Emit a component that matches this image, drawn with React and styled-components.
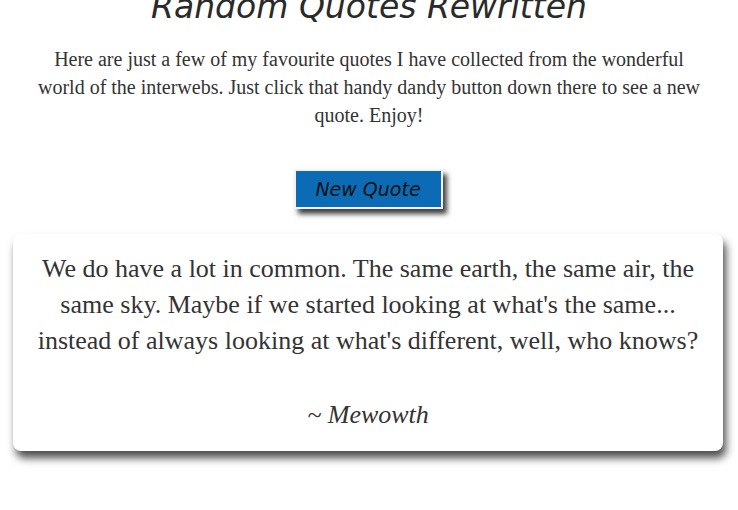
import React from "react";
import styled, { createGlobalStyle } from "styled-components";

const GlobalStyle = createGlobalStyle`
  body {
    margin: 0;
    background: #fff;
    font-family: "Liberation Serif", "Times New Roman", serif;
    color: #333;
  }
`;

const quote = {
  text: "We do have a lot in common. The same earth, the same air, the same sky. Maybe if we started looking at what's the same... instead of always looking at what's different, well, who knows?",
  author: "Mewowth",
};

export default function App() {
  return (
    <Page>
      <GlobalStyle />
      <Title>Random Quotes Rewritten</Title>
      <Intro>
        Here are just a few of my favourite quotes I have collected from the wonderful world of the
        interwebs. Just click that handy dandy button down there to see a new quote. Enjoy!
      </Intro>
      <ButtonRow>
        <QuoteButton onClick={() => {}}>New Quote</QuoteButton>
      </ButtonRow>
      <Card>
        <QuoteText>{quote.text}</QuoteText>
        <Author>~ {quote.author}</Author>
      </Card>
    </Page>
  );
}

const Page = styled.div`
  display: flex;
  flex-direction: column;
  align-items: center;
  padding: 0 15px 60px;
`;

const Title = styled.h1`
  margin: -13px 0 0;
  font-family: "Comic Sans MS", "DejaVu Sans", sans-serif;
  font-style: italic;
  font-weight: normal;
  font-size: 33px;
  line-height: 40px;
  color: #2a2a2a;
`;

const Intro = styled.p`
  margin: 18px 0 0;
  max-width: 670px;
  text-align: center;
  font-size: 20px;
  line-height: 28px;
  color: #333;
`;

const ButtonRow = styled.div`
  display: flex;
  justify-content: center;
  margin-top: 40px;
`;

const QuoteButton = styled.button`
  width: 149px;
  height: 40px;
  margin-right: 2px;
  background: #0b6bb5;
  border: 2px solid #f2f2f2;
  box-shadow: 4px 5px 5px rgba(0, 0, 0, 0.75);
  font-family: "Comic Sans MS", "DejaVu Sans", sans-serif;
  font-style: italic;
  font-size: 19px;
  color: #111;
  cursor: pointer;
`;

const Card = styled.div`
  align-self: stretch;
  margin: 25px 0 0 -2px;
  padding: 17px 18px 18px;
  background: #fff;
  border-radius: 8px;
  box-shadow: 3px 7px 9px rgba(0, 0, 0, 0.7);
  text-align: center;
`;

const QuoteText = styled.p`
  margin: 0;
  font-size: 26px;
  line-height: 36px;
  color: #333;
`;

const Author = styled.p`
  margin: 38px 0 0;
  font-size: 26px;
  font-style: italic;
  line-height: 36px;
  color: #333;
`;
